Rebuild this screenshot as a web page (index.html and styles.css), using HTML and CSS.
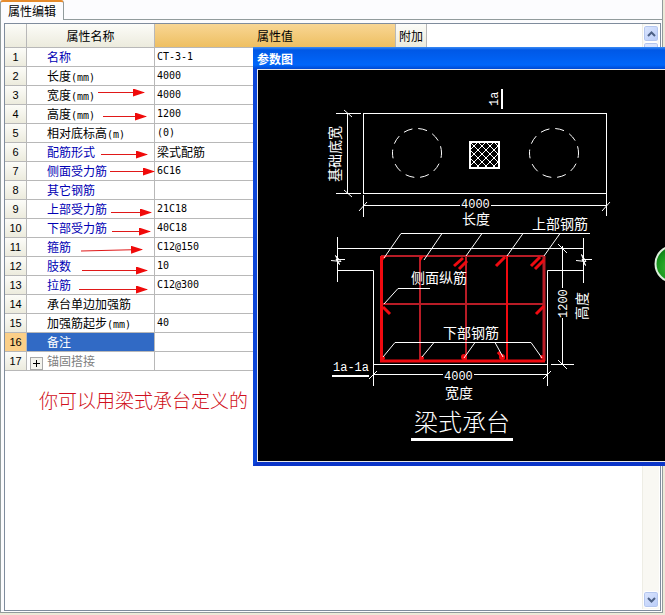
FILE: index.html
```html
<!DOCTYPE html>
<html lang="zh-CN">
<head>
<meta charset="utf-8">
<title>属性编辑</title>
<link rel="stylesheet" href="styles.css">
</head>
<body>
<main class="page">
  <div class="tabs" role="tablist">
    <button class="tab" type="button" role="tab" aria-selected="true">属性编辑</button>
  </div>
  <section class="panel">
    <div class="frame">
      <div class="content">
        <table class="props">
          <colgroup><col class="col-no"><col class="col-name"><col class="col-value"><col class="col-extra"></colgroup>
          <thead>
            <tr><th></th><th>属性名称</th><th class="active">属性值</th><th>附加</th></tr>
          </thead>
          <tbody>
            <tr><th>1</th><td class="name key">名称</td><td class="value">CT-3-1</td><td></td></tr>
            <tr><th>2</th><td class="name">长度<span class="unit">(mm)</span></td><td class="value">4000</td><td></td></tr>
            <tr><th>3</th><td class="name">宽度<span class="unit">(mm)</span></td><td class="value">4000</td><td></td></tr>
            <tr><th>4</th><td class="name">高度<span class="unit">(mm)</span></td><td class="value">1200</td><td></td></tr>
            <tr><th>5</th><td class="name">相对底标高<span class="unit">(m)</span></td><td class="value">(0)</td><td></td></tr>
            <tr><th>6</th><td class="name key">配筋形式</td><td class="value cjk">梁式配筋</td><td></td></tr>
            <tr><th>7</th><td class="name key">侧面受力筋</td><td class="value">6C16</td><td></td></tr>
            <tr><th>8</th><td class="name key">其它钢筋</td><td class="value"></td><td></td></tr>
            <tr><th>9</th><td class="name key">上部受力筋</td><td class="value">21C18</td><td></td></tr>
            <tr><th>10</th><td class="name key">下部受力筋</td><td class="value">40C18</td><td></td></tr>
            <tr><th>11</th><td class="name key">箍筋</td><td class="value">C12@150</td><td></td></tr>
            <tr><th>12</th><td class="name key">肢数</td><td class="value">10</td><td></td></tr>
            <tr><th>13</th><td class="name key">拉筋</td><td class="value">C12@300</td><td></td></tr>
            <tr><th>14</th><td class="name">承台单边加强筋</td><td class="value"></td><td></td></tr>
            <tr><th>15</th><td class="name">加强筋起步<span class="unit">(mm)</span></td><td class="value">40</td><td></td></tr>
            <tr class="selected"><th>16</th><td class="name">备注</td><td class="value"></td><td></td></tr>
            <tr><th>17</th><td class="name group"><button class="expand" type="button" aria-label="展开"><svg width="9" height="9" viewBox="0 0 9 9"><path d="M1 4.500H8M4.500 1V8" stroke="#000"/></svg></button>锚固搭接</td><td class="value"></td><td></td></tr>
          </tbody>
        </table>
        <p class="note">你可以用梁式承台定义的</p>
      </div>
      <div class="scrollbar">
        <button class="scroll-btn" type="button" aria-label="向上"><svg width="9" height="6" viewBox="0 0 9 6"><path d="M1 5L4.500 1.500L8 5" fill="none" stroke="#4d6185" stroke-width="2"/></svg></button>
        <div class="thumb"></div>
        <button class="scroll-btn down" type="button" aria-label="向下"><svg width="9" height="6" viewBox="0 0 9 6"><path d="M1 1L4.500 4.500L8 1" fill="none" stroke="#4d6185" stroke-width="2"/></svg></button>
      </div>
    </div>
  </section>

  <svg class="arrows" width="160" height="210" viewBox="0 85 160 210" aria-hidden="true">
    <defs><marker id="head" markerUnits="userSpaceOnUse" markerWidth="12" markerHeight="8" refX="11" refY="4" orient="auto"><path d="M0 0L12 4L0 8Z" fill="#f00a0a"/></marker></defs>
    <g stroke="#e01818">
      <path d="M98 92.500H144" marker-end="url(#head)"/>
      <path d="M103 116.500H146" marker-end="url(#head)"/>
      <path d="M101 154.500H147" marker-end="url(#head)"/>
      <path d="M110 171.500H154" marker-end="url(#head)"/>
      <path d="M111 212.500H151" marker-end="url(#head)"/>
      <path d="M112 231.500H150" marker-end="url(#head)"/>
      <path d="M81 251L142 249.500" marker-end="url(#head)"/>
      <path d="M82 270.500H147" marker-end="url(#head)"/>
      <path d="M79 289.500H147" marker-end="url(#head)"/>
    </g>
  </svg>

  <section class="dialog" role="dialog" aria-labelledby="dlg-title">
    <h2 class="dialog-title" id="dlg-title">参数图</h2>
    <div class="canvas">
      <svg class="drawing" width="407" height="391" viewBox="258 70 407 391">
        <defs>
          <pattern id="hatch" x="470" y="142" width="8" height="8" patternUnits="userSpaceOnUse"><path d="M0 0L8 8M8 0L0 8" stroke="#fff"/></pattern>
          <radialGradient id="ball" cx="0.450" cy="0.600" r="0.600"><stop offset="0" stop-color="#3fbb38"/><stop offset="0.700" stop-color="#16931b"/><stop offset="1" stop-color="#087012"/></radialGradient>
        </defs>
        <g fill="none" stroke="#fff">
          <!-- plan view -->
          <rect x="363.500" y="113.500" width="243" height="80"/>
          <path d="M347.500 113V194M336 113.500H361M336 193.500H361M344 110L352 117M344 190L352 197"/>
          <circle cx="417" cy="153" r="24.500" stroke-dasharray="9 6" stroke-dashoffset="4"/>
          <circle cx="554" cy="153" r="24.500" stroke-dasharray="9 6" stroke-dashoffset="4"/>
          <rect x="470" y="142" width="29" height="26" fill="url(#hatch)" stroke-width="2"/>
          <path d="M502 89V109" stroke-width="2"/>
          <path d="M363.500 195V217M606.500 193V216M363 205.500H460M491 205.500H607M359 211L367 202M602 211L610 202"/>
          <!-- section outline -->
          <path d="M337.500 237V282M583.500 238V283M338 248.500H584M338 270.500H373.500V386M584 270.500H547.500V386M373 364.500H548M551 364.500H574"/>
          <path d="M331 260.500L341 261.500L335.500 255.500L339.500 264.500L336 259.500H345M576 260.500L586 261.500L581.500 254.500L585.500 265.500L582 259.500H592"/>
          <path d="M562.500 246V288M562.500 318V365M558 244L567 253M558 360L567 369"/>
          <path d="M373 374.500H443M474 374.500H548M369 379L377 371M543 379L551 371"/>
          <path d="M332 376H369" stroke-width="2"/>
          <path d="M411 439.500H513" stroke-width="3"/>
        </g>
        <!-- reinforcement -->
        <g fill="none" stroke="#b81c26" stroke-width="2">
          <path d="M381 256H544M381 304H544M420 256V361M466 256V361"/>
          <path d="M544 256V361" stroke-width="3"/>
        </g>
        <g fill="none" stroke="#f00a10">
          <path d="M381.500 256V361H545" stroke-width="3"/>
          <path d="M507 256V361" stroke-width="2"/>
          <path d="M454 266L463 258M459 269L467 261M496 266L505 257M531 266L540 257M535 269L544 260M383 307L390 314M536 314L544 306M498 352L504 359" stroke-width="3"/>
        </g>
        <g fill="#f00a10">
          <path d="M381 256H387L381 262ZM420 256H424L420 262Z"/>
          <circle cx="383" cy="358" r="2"/><circle cx="422" cy="358" r="2"/><circle cx="464" cy="357" r="3"/><circle cx="502" cy="357" r="3"/><circle cx="542" cy="357" r="2"/>
        </g>
        <g fill="none" stroke="#fff">
          <path d="M384 258L401 233.500H590M424 260L442 233.500M466 256L482 233.500M507 256L523 233.500M544 256L560 233.500"/>
          <path d="M384 304L398 288.500H430"/>
          <path d="M383 357L395 342.500H531L542 358M422 357L434 342.500M464 358L475 342.500M495 342.500L503 357"/>
        </g>
        <g class="labels">
          <text x="462" y="224">长度</text>
          <text x="532" y="229">上部钢筋</text>
          <text x="411" y="283">侧面纵筋</text>
          <text x="443" y="338">下部钢筋</text>
          <text x="445" y="398">宽度</text>
          <text transform="translate(340 182) rotate(-90)">基础底宽</text>
          <text transform="translate(587 320) rotate(-90)">高度</text>
          <text class="caption" x="414" y="431">梁式承台</text>
        </g>
        <g class="numbers">
          <text x="461" y="208">4000</text>
          <text x="444" y="380">4000</text>
          <text x="333" y="371">1a-1a</text>
          <text transform="translate(498 106) rotate(-90)">1a</text>
          <text transform="translate(567 318) rotate(-90)">1200</text>
        </g>
        <circle cx="673.500" cy="264" r="18" fill="url(#ball)" stroke="#dcefdc" stroke-width="2"/>
      </svg>
    </div>
  </section>
</main>
</body>
</html>
```

FILE: styles.css
```css
* {
  box-sizing: border-box;
}

body {
  margin: 0;
  background: #ece9d8;
  color: #000;
  font: 12px/18px "Noto Sans CJK SC", sans-serif;
}

button {
  margin: 0;
  padding: 0;
  font: inherit;
  color: inherit;
}

.page {
  position: relative;
  display: flex;
  flex-direction: column;
  min-height: 100vh;
  padding: 0 2px 2px 0;
  overflow: hidden;
}

.tabs {
  display: flex;
  height: 20px;
  background: #fcfcfe;
  border-right: 1px solid #919b9c;
}

.tabs::after {
  content: "";
  flex: 1;
  border-bottom: 1px solid #919b9c;
}

.tab {
  width: 64px;
  background: #fcfcfe;
  border: 1px solid #919b9c;
  border-top: 2px solid #e68b2c;
  border-bottom: 0;
  border-radius: 3px 3px 0 0;
  line-height: 16px;
}

.panel {
  flex: 1;
  display: flex;
  padding: 3px 1px 1px 3px;
  background: #fcfcfe;
  border: 1px solid #919b9c;
  border-top: 0;
}

.frame {
  flex: 1;
  display: flex;
  justify-content: space-between;
  padding: 0 1px 1px 0;
  background: #fff;
  border: 1px solid #7f8c9d;
}

.props {
  width: 422px;
  table-layout: fixed;
  border-collapse: separate;
  border-spacing: 0;
}

.col-no { width: 22px; }
.col-name { width: 128px; }
.col-value { width: 241px; }
.col-extra { width: 31px; }

.props th,
.props td {
  height: 19px;
  padding: 0;
  border-right: 1px solid #b8b8b8;
  border-bottom: 1px solid #b8b8b8;
  line-height: 18px;
  font-weight: 400;
  white-space: nowrap;
}

.props th {
  background: linear-gradient(#fcfcf8, #ecebdd);
}

.props thead th {
  height: 24px;
}

.props thead .active {
  background: linear-gradient(#f8d694, #eebf61);
}

.props tbody th,
.value,
.unit {
  font-family: "DejaVu Sans Mono", monospace;
  font-size: 10px;
}

.unit {
  line-height: 12px;
}

.props tbody th {
  font-family: "Liberation Sans", sans-serif;
  font-size: 11px;
}

.props .name {
  padding-left: 20px;
}

.props .value {
  padding-left: 2px;
}

.props .cjk {
  font-family: "Noto Sans CJK SC", sans-serif;
  font-size: 12px;
}

.key {
  color: #0000b4;
}

.selected .name {
  background: #316ac5;
  color: #fff;
}

.props .selected th {
  background: #fbcf88;
}

.props .group {
  padding-left: 3px;
  color: #808080;
}

.expand {
  display: inline-flex;
  align-items: center;
  justify-content: center;
  width: 13px;
  height: 13px;
  margin-right: 4px;
  vertical-align: -2px;
  background: #f4f4ee;
  border: 1px solid #a8a8a8;
}

.note {
  margin: 16px 0 0 34px;
  color: #d01020;
  font-size: 19px;
  font-weight: 300;
  line-height: 26px;
}

.scrollbar {
  display: flex;
  flex-direction: column;
  width: 17px;
  padding: 1px 0;
  background: #f9f8f3;
  border-left: 1px solid #eeede5;
}

.scroll-btn,
.thumb {
  display: flex;
  align-items: center;
  justify-content: center;
  height: 17px;
  background: linear-gradient(135deg, #dce6fe, #b9ccf8);
  border: 1px solid #fff;
  border-radius: 3px;
  box-shadow: inset 0 0 0 1px #b4c6ee;
}

.thumb {
  height: 120px;
}

.down {
  margin-top: auto;
}

.arrows {
  position: absolute;
  left: 0;
  top: 85px;
  pointer-events: none;
}

.dialog {
  position: absolute;
  left: 253px;
  right: 0;
  top: 47px;
  background: #000;
  border-left: 4px solid #0b45d8;
  border-bottom: 4px solid #0b35c8;
}

.dialog-title {
  height: 22px;
  margin: 0 0 0 -4px;
  padding-left: 4px;
  background: linear-gradient(#3c8cf4, #0058e6 3px, #0066fa 18px, #0048d0);
  color: #fff;
  font-size: 12px;
  line-height: 24px;
}

.canvas {
  overflow: hidden;
  border: 1px solid #e8e8e8;
  border-right: 0;
}

.drawing {
  display: block;
}

.labels,
.numbers {
  fill: #fff;
  font-size: 14px;
}

.numbers {
  font-family: "Liberation Mono", monospace;
  font-size: 12px;
}

.caption {
  font-size: 24px;
  font-weight: 300;
}
```
